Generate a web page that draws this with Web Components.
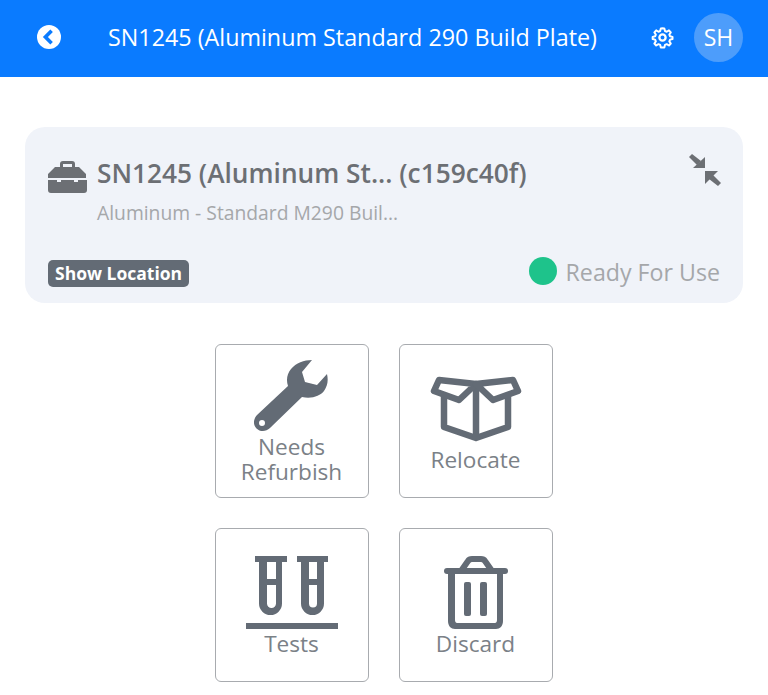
<!DOCTYPE html>
<html lang="en">
<head>
<meta charset="utf-8">
<title>SN1245</title>
<style>
  html, body { margin: 0; padding: 0; background: #fff; }
  body { font-family: "Open Sans", "Noto Sans", sans-serif; width: 768px; height: 695px; overflow: hidden; }
</style>
</head>
<body>
<app-header title-text="SN1245 (Aluminum Standard 290 Build Plate)" initials="SH"></app-header>
<main-view>
  <plate-card
    heading="SN1245 (Aluminum St... (c159c40f)"
    sub="Aluminum - Standard M290 Buil..."
    status="Ready For Use"></plate-card>
  <action-grid>
    <action-tile label="Needs Refurbish" icon="wrench"></action-tile>
    <action-tile label="Relocate" icon="box"></action-tile>
    <action-tile label="Tests" icon="tubes"></action-tile>
    <action-tile label="Discard" icon="trash"></action-tile>
  </action-grid>
</main-view>

<script>
const headerTemplate = document.createElement('template');
headerTemplate.innerHTML = `
<style>
  :host {
    display: flex;
    align-items: center;
    height: 77px;
    box-sizing: border-box;
    padding: 0 25px 3px 36px;
    background: #0a7bff;
    color: #fff;
  }
  .back { width: 26px; height: 26px; flex-shrink: 0; display: block; }
  h1 {
    flex: 1;
    margin: 0 0 0 46px;
    font-size: 23.3px;
    font-weight: 400;
    white-space: nowrap;
  }
  .gear { width: 25px; height: 25px; display: block; margin-right: 19px; }
  .avatar {
    width: 49px;
    height: 49px;
    border-radius: 50%;
    background: #4d9dfb;
    display: flex;
    align-items: center;
    justify-content: center;
    font-size: 23px;
  }
</style>
<svg class="back" viewBox="0 0 26 26" aria-hidden="true">
  <circle cx="13" cy="13" r="12" fill="#fff"/>
  <path d="M15.6 6.8 9.4 13l6.2 6.2" fill="none" stroke="#0a7bff" stroke-width="3.6"/>
</svg>
<h1 id="title"></h1>
<svg class="gear" viewBox="0 0 24 24" fill="none" stroke="#fff" stroke-width="2.2" stroke-linejoin="round" aria-hidden="true">
  <circle cx="12" cy="12" r="3"/>
  <path d="M12 1.8l2 .1.7 2.9 1.9.8 2.5-1.5 2 2.2-1.6 2.4.8 1.9 2.7.7v2.3l-2.7.7-.8 1.9 1.6 2.4-2 2.2-2.5-1.5-1.9.8-.7 2.9h-3.9l-.7-2.9-1.9-.8-2.5 1.5-2-2.2 1.6-2.4-.8-1.9-2.7-.7v-2.3l2.7-.7.8-1.9-1.6-2.4 2-2.2 2.5 1.5 1.9-.8.7-2.9z" transform="translate(1.6 1.6) scale(.87)"/>
</svg>
<div class="avatar" id="avatar"></div>
`;

class AppHeader extends HTMLElement {
  constructor() {
    super();
    this.attachShadow({ mode: 'open' });
    this.shadowRoot.appendChild(headerTemplate.content.cloneNode(true));
  }
  connectedCallback() {
    this.shadowRoot.getElementById('title').textContent = this.getAttribute('title-text');
    this.shadowRoot.getElementById('avatar').textContent = this.getAttribute('initials');
  }
}
customElements.define('app-header', AppHeader);

class MainView extends HTMLElement {
  constructor() {
    super();
    this.attachShadow({ mode: 'open' }).innerHTML = `
      <style>
        :host { display: block; padding: 50px 25px 0; }
      </style>
      <slot></slot>`;
  }
}
customElements.define('main-view', MainView);

const cardTemplate = document.createElement('template');
cardTemplate.innerHTML = `
<style>
  :host {
    display: grid;
    grid-template-columns: 1fr auto;
    grid-template-rows: auto 1fr auto;
    height: 176px;
    box-sizing: border-box;
    padding: 27px 23px 16px 23px;
    background: #f0f3f9;
    border-radius: 20px;
  }
  .head { display: flex; align-items: center; gap: 10px; height: 38px; }
  .kit { width: 39px; height: 34px; flex-shrink: 0; display: block; margin-top: 8px; }
  h2 { margin: 0; font-size: 26.25px; font-weight: 600; color: #6c6f74; white-space: nowrap; }
  .collapse { width: 32px; height: 32px; display: block; justify-self: end; margin-right: -1px; }
  .sub {
    grid-column: 1 / -1;
    margin: 7px 0 0 49px;
    font-size: 19.3px;
    color: #a5a7aa;
    white-space: nowrap;
  }
  .location {
    align-self: end;
    justify-self: start;
    background: #636b75;
    color: #fff;
    font-size: 17.5px;
    font-weight: 700;
    line-height: 27px;
    padding: 0 7px;
    border-radius: 5px;
  }
  .status { display: flex; align-items: center; gap: 9px; align-self: end; color: #a5a7aa; font-size: 23.2px; line-height: 30px; }
  .dot { width: 28px; height: 28px; border-radius: 50%; background: #1ec38b; margin-top: -3px; }
</style>
<div class="head">
  <svg class="kit" viewBox="0 0 39 34" aria-hidden="true">
    <path fill="#6c6f74" fill-rule="evenodd" d="M12 7V4a3 3 0 0 1 3-3h9a3 3 0 0 1 3 3v3h4l7 7v4H0v-4l7-7zm3-3v3h9V4z"/>
    <path fill="#6c6f74" d="M0 20h9v2h4v-2h13v2h4v-2h9v10a3 3 0 0 1-3 3H3a3 3 0 0 1-3-3z"/>
  </svg>
  <h2 id="heading"></h2>
</div>
<svg class="collapse" viewBox="0 0 32 32" aria-hidden="true" fill="#6c6f74">
  <path d="M16 14H4L16 3z"/>
  <path d="M0 3l3-3 9 7-4 4z"/>
  <path d="M16 17h13L16 30z"/>
  <path d="M32 29l-3 3-9-7 4-4z"/>
</svg>
<div class="sub" id="sub"></div>
<div class="location">Show Location</div>
<div class="status"><span class="dot"></span><span id="status"></span></div>
`;

class PlateCard extends HTMLElement {
  constructor() {
    super();
    this.attachShadow({ mode: 'open' });
    this.shadowRoot.appendChild(cardTemplate.content.cloneNode(true));
  }
  connectedCallback() {
    for (const key of ['heading', 'sub', 'status']) {
      this.shadowRoot.getElementById(key).textContent = this.getAttribute(key);
    }
  }
}
customElements.define('plate-card', PlateCard);

class ActionGrid extends HTMLElement {
  constructor() {
    super();
    this.attachShadow({ mode: 'open' }).innerHTML = `
      <style>
        :host {
          display: grid;
          grid-template-columns: 154px 154px;
          gap: 30px;
          justify-content: center;
          margin-top: 41px;
          padding-right: 1px;
        }
      </style>
      <slot></slot>`;
  }
}
customElements.define('action-grid', ActionGrid);

const tileIcons = {
  wrench: `<svg width="76" height="72" viewBox="0 0 76 72" fill="#636b75" style="margin:15px 0 2px">
    <path fill-rule="evenodd" d="M58 0 48 12l3 10 12 3 10-11c1.500 7 .5 12-3 17-4 5-12 8-22 6L16 68c-4 4-10 4-13.500 .5S-1 59 3 55l31-29c-2-6-1-12 3-17C42 3 50 0 58 0zM8 60a3 3 0 1 0 0 6 3 3 0 0 0 0-6z"/></svg>`,
  box: `<svg width="92" height="66" viewBox="0 0 92 66" fill="none" stroke="#636b75" stroke-width="6.5" stroke-linejoin="round" style="margin:31px 0 5px">
    <path d="M14 20v31l32 11 32-11V20"/>
    <path d="M46 9v53"/>
    <path d="M46 8 9 4 4 15l25 9z"/>
    <path d="M46 8l37-4 5 11-25 9z"/></svg>`,
  tubes: `<svg width="92" height="74" viewBox="0 0 92 74" fill="#636b75" style="margin:27px 0 1px">
    <path fill-rule="evenodd" d="M9 0h32v6h-5v41.500a11.500 11.500 0 0 1-23 0V6H9zm12 6v17h9V6zm0 23v18.500a4.500 4.500 0 0 0 9 0V29z"/>
    <path fill-rule="evenodd" d="M51 0h31v6h-4v41.500a11.500 11.500 0 0 1-23 0V6h-4zm12 6v17h8V6zm0 23v18.500a4 4 0 0 0 8 0V29z"/>
    <rect x="0" y="67" width="92" height="6"/></svg>`,
  trash: `<svg width="64" height="74" viewBox="0 0 64 74" fill="#636b75" style="margin:27px 0 1px">
    <path fill="none" stroke="#636b75" stroke-width="6" stroke-linejoin="round" d="M17 15l7-10c1-1.500 2-2 4-2h9c2 0 3 .5 4 2l7 10"/>
    <rect x="0" y="12" width="64" height="6" rx="3"/>
    <path fill-rule="evenodd" d="M4 15h55v50c0 5-3 8-7 8H11c-4 0-7-3-7-8zm7 3v46c0 2 1 3 2 3h38c1 0 2-1 2-3V18z"/>
    <rect x="20" y="26" width="7" height="34" rx="2"/>
    <rect x="36" y="26" width="7" height="34" rx="2"/></svg>`,
};

class ActionTile extends HTMLElement {
  constructor() {
    super();
    this.attachShadow({ mode: 'open' }).innerHTML = `
      <style>
        :host {
          display: flex;
          flex-direction: column;
          align-items: center;
          width: 154px;
          height: 154px;
          box-sizing: border-box;
          border: 1.5px solid #a8abaf;
          border-radius: 6px;
          background: #fff;
        }
        #icon { display: flex; }
        svg { display: block; }
        .label {
          width: 120px;
          text-align: center;
          font-size: 22.6px;
          line-height: 25px;
          color: #7b8187;
        }
      </style>
      <div id="icon"></div>
      <div class="label" id="label"></div>`;
  }
  connectedCallback() {
    this.shadowRoot.getElementById('icon').innerHTML = tileIcons[this.getAttribute('icon')];
    this.shadowRoot.getElementById('label').textContent = this.getAttribute('label');
  }
}
customElements.define('action-tile', ActionTile);
</script>
</body>
</html>
